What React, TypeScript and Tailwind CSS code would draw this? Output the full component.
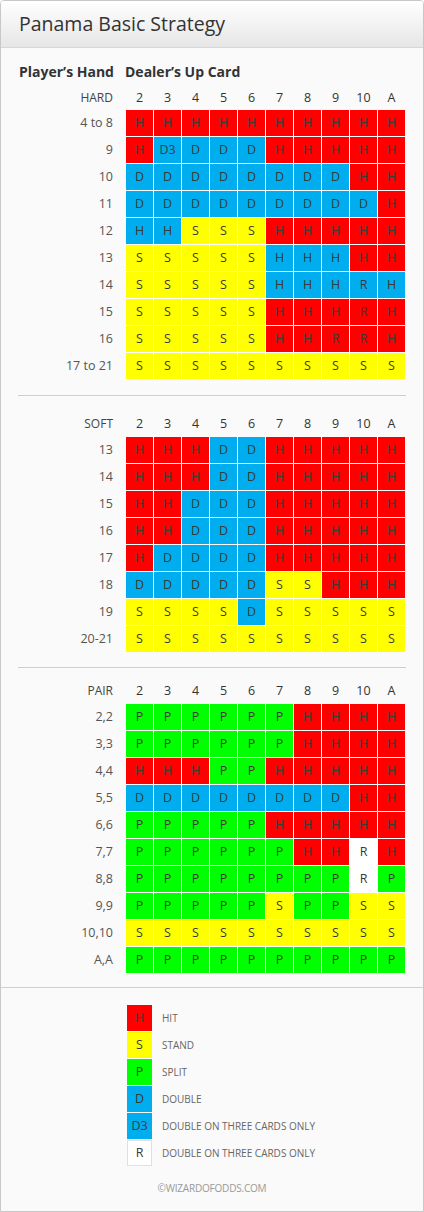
const COLS = ["2", "3", "4", "5", "6", "7", "8", "9", "10", "A"];

// each cell: colour letter + shown text, e.g. "rH" = red Hit, "bD3" = blue D3
const rep = (c: string, n: number) => Array(n).fill(c) as string[];

const HARD: [string, string[]][] = [
  ["4 to 8", rep("rH", 10)],
  ["9", ["rH", "bD3", "bD", "bD", "bD", ...rep("rH", 5)]],
  ["10", [...rep("bD", 8), "rH", "rH"]],
  ["11", [...rep("bD", 9), "rH"]],
  ["12", ["bH", "bH", "yS", "yS", "yS", ...rep("rH", 5)]],
  ["13", [...rep("yS", 5), "bH", "bH", "bH", "rH", "rH"]],
  ["14", [...rep("yS", 5), "bH", "bH", "bH", "bR", "bH"]],
  ["15", [...rep("yS", 5), "rH", "rH", "rH", "rR", "rH"]],
  ["16", [...rep("yS", 5), "rH", "rH", "rR", "rR", "rH"]],
  ["17 to 21", rep("yS", 10)],
];

const SOFT: [string, string[]][] = [
  ["13", ["rH", "rH", "rH", "bD", "bD", ...rep("rH", 5)]],
  ["14", ["rH", "rH", "rH", "bD", "bD", ...rep("rH", 5)]],
  ["15", ["rH", "rH", "bD", "bD", "bD", ...rep("rH", 5)]],
  ["16", ["rH", "rH", "bD", "bD", "bD", ...rep("rH", 5)]],
  ["17", ["rH", "bD", "bD", "bD", "bD", ...rep("rH", 5)]],
  ["18", [...rep("bD", 5), "yS", "yS", "rH", "rH", "rH"]],
  ["19", ["yS", "yS", "yS", "yS", "bD", ...rep("yS", 5)]],
  ["20-21", rep("yS", 10)],
];

const PAIR: [string, string[]][] = [
  ["2,2", [...rep("gP", 6), ...rep("rH", 4)]],
  ["3,3", [...rep("gP", 6), ...rep("rH", 4)]],
  ["4,4", ["rH", "rH", "rH", "gP", "gP", ...rep("rH", 5)]],
  ["5,5", [...rep("bD", 8), "rH", "rH"]],
  ["6,6", [...rep("gP", 5), ...rep("rH", 5)]],
  ["7,7", [...rep("gP", 6), "rH", "rH", "wR", "rH"]],
  ["8,8", [...rep("gP", 8), "wR", "gP"]],
  ["9,9", [...rep("gP", 5), "yS", "gP", "gP", "yS", "yS"]],
  ["10,10", rep("yS", 10)],
  ["A,A", rep("gP", 10)],
];

const BG: Record<string, string> = {
  r: "bg-[#ff0000]",
  b: "bg-[#00aeef]",
  y: "bg-[#ffff00]",
  g: "bg-[#00ff00]",
  w: "bg-white",
};

const LEGEND = [
  ["rH", "Hit"],
  ["yS", "Stand"],
  ["gP", "Split"],
  ["bD", "Double"],
  ["bD3", "Double on three cards only"],
  ["wR", "Double on three cards only"],
];

function Section({ title, rows, headClass, gridClass }: { title: string; rows: [string, string[]][]; headClass: string; gridClass: string }) {
  return (
    <div>
      <div className={`flex items-center h-[20px] ${headClass}`}>
        <div className="w-[112px] text-right text-[12px] uppercase text-[#444]">{title}</div>
        <div className="ml-[13px] flex gap-px">
          {COLS.map((c) => (
            <div key={c} className="w-[27px] text-center text-[12.5px] text-[#333]">{c}</div>
          ))}
        </div>
      </div>
      <div className={`flex ${gridClass}`}>
        <div className="w-[112px] flex flex-col gap-px">
          {rows.map(([label]) => (
            <div key={label} className="h-[26px] flex items-center justify-end text-[12.5px] text-[#555]">{label}</div>
          ))}
        </div>
        <div className="ml-[13px] grid grid-cols-[repeat(10,27px)] auto-rows-[26px] gap-px bg-white">
          {rows.flatMap(([label, cells]) =>
            cells.map((c, i) => (
              <div key={label + i} className={`${BG[c[0]]} flex items-center justify-center text-[12.5px] text-[#3a3a3a]`}>
                {c.slice(1)}
              </div>
            ))
          )}
        </div>
      </div>
    </div>
  );
}

export default function App() {
  return (
    <div className="w-[424px] h-[1212px] bg-white" style={{ fontFamily: '"Open Sans", "Noto Sans", sans-serif' }}>
      <div className="h-[1212px] border border-[#c8c8c8] rounded-t-[4px] bg-[#fafafa] overflow-hidden flex flex-col">
        <div className="h-[47px] border-b border-[#d8d8d8] bg-gradient-to-b from-white to-[#e6e6e6] flex items-center pl-[18px]">
          <h1 className="text-[19.5px] text-[#333] leading-none">Panama Basic Strategy</h1>
        </div>

        <div className="flex items-center h-[20px] mt-[13px] text-[14px] font-bold text-[#333] whitespace-nowrap">
          <div className="w-[124px] pl-[18px]">Player’s Hand</div>
          <div>Dealer’s Up Card</div>
        </div>

        <Section title="Hard" rows={HARD} headClass="mt-[7px]" gridClass="mt-[2px]" />
        <div className="mt-[16px] mx-[17px] h-px bg-[#cfcfcf]" />
        <Section title="Soft" rows={SOFT} headClass="mt-[18px]" gridClass="mt-[3px]" />
        <div className="mt-[15px] mx-[17px] h-px bg-[#cfcfcf]" />
        <Section title="Pair" rows={PAIR} headClass="mt-[13px]" gridClass="mt-[3px]" />
        <div className="mt-[14px] h-px bg-[#cfcfcf]" />

        <div className="mt-[17px] ml-[126px] flex flex-col gap-px">
          {LEGEND.map(([c, text], i) => (
            <div key={i} className="flex items-center h-[26px]">
              <div className={`${BG[c[0]]} ${c[0] === "w" ? "border border-[#e0e0e0]" : ""} w-[25px] h-[26px] flex items-center justify-center text-[12.5px] text-[#3a3a3a]`}>
                {c.slice(1)}
              </div>
              <div className="ml-[10px] text-[10px] uppercase text-[#666]">{text}</div>
            </div>
          ))}
        </div>

        <div className="mt-[15px] text-center text-[10px] text-[#999] tracking-[-0.2px]">©WIZARDOFODDS.COM</div>
      </div>
    </div>
  );
}
